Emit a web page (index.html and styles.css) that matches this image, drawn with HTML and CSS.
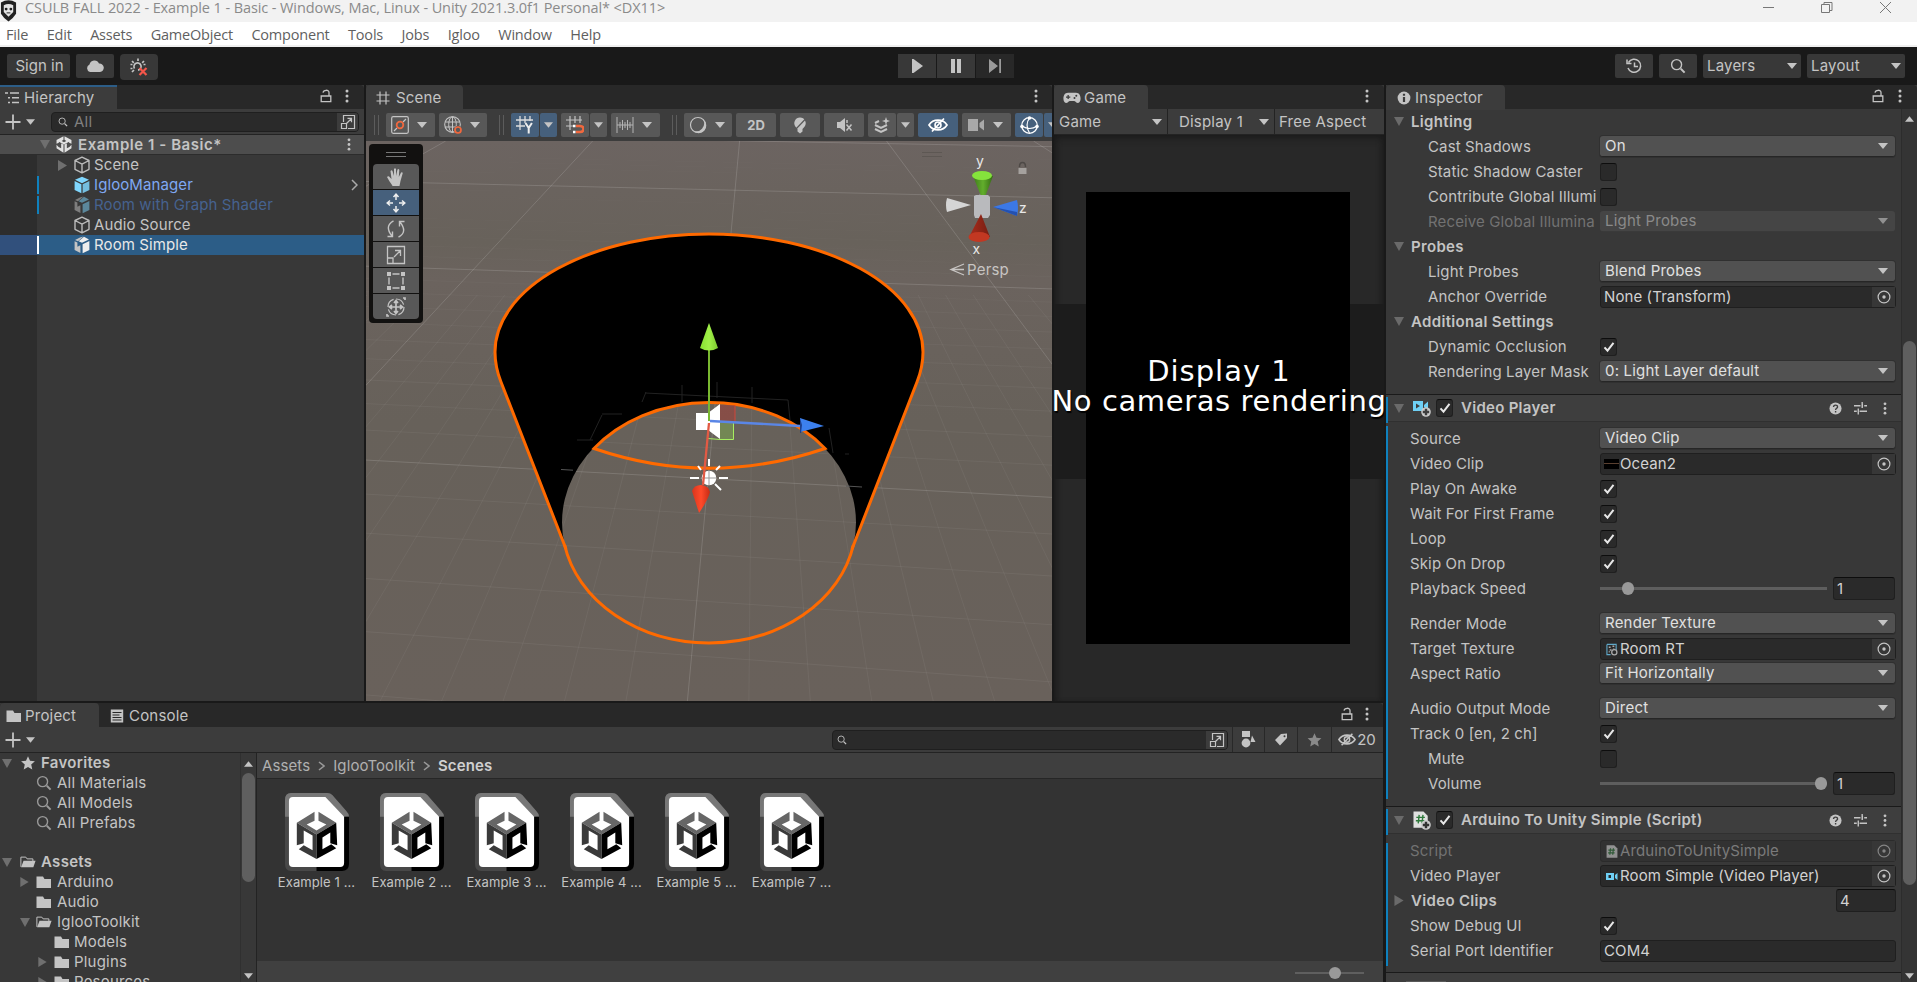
FILE: index.html
```html
<!DOCTYPE html>
<html lang="en">
<head>
<meta charset="utf-8">
<title>CSULB FALL 2022 - Example 1 - Basic</title>
<link rel="stylesheet" href="styles.css">
</head>
<body>
<svg class="defs" width="0" height="0">
  <defs>
    <symbol id="i-lock" viewBox="0 0 12 14"><path d="M1.2 7h9.6v5.6H1.2zM3 3.6C3.4 .6 9 .4 9 3.6V7" fill="none" stroke="currentColor" stroke-width="1.3"/></symbol>
    <symbol id="i-kebab" viewBox="0 0 4 14"><circle cx="2" cy="2" r="1.5"/><circle cx="2" cy="7" r="1.5"/><circle cx="2" cy="12" r="1.5"/></symbol>
    <symbol id="i-down" viewBox="0 0 10 6"><path d="M0 0h10L5 6z"/></symbol>
    <symbol id="i-up" viewBox="0 0 10 6"><path d="M0 6h10L5 0z"/></symbol>
    <symbol id="i-right" viewBox="0 0 10 12"><path d="M0 0v12l10-6z"/></symbol>
    <symbol id="i-plus" viewBox="0 0 16 16"><path d="M8 .5v15M.5 8h15" stroke="currentColor" stroke-width="1.8"/></symbol>
    <symbol id="i-search" viewBox="0 0 16 16"><circle cx="6.6" cy="6.6" r="5" fill="none" stroke="currentColor" stroke-width="1.4"/><path d="M10.8 10.8l3.8 3.8" stroke="currentColor" stroke-width="2"/></symbol>
    <symbol id="i-open" viewBox="0 0 16 16"><path d="M3.5 8V1.5h11v13H8M1.5 9.500h5v5h-5zM6 10l5.500-5.500M7.500 4.300h4v4" fill="none" stroke="currentColor" stroke-width="1.2"/></symbol>
    <symbol id="i-cube" viewBox="0 0 18 18"><path d="M9 1.200l7 3.300v8.800l-7 3.600-7-3.600V4.500zM2 4.500l7 3.700 7-3.700M9 8.200v8.600" fill="none" stroke="currentColor" stroke-width="1.400" stroke-linejoin="round"/></symbol>
    <symbol id="i-prefab" viewBox="0 0 18 18"><path d="M9 .8l7 3-7 3.400-7-3.400z"/><path d="M1.600 5l6.800 3.300v9L1.600 14z"/><path d="M16.400 5L9.600 8.300v9l6.800-3.300z" opacity=".85"/></symbol>
    <symbol id="i-model" viewBox="0 0 18 18"><path d="M7 1.500l3.500-1L5 5.200 2 4zM1.600 5.300l2.800 1.200v4.300l3-1.500V17L1.600 14z" fill="#c4c4c4"/><path d="M11 .8l5 2.600-7 3.400-3.400-1.500z"/><path d="M16.400 5L9.600 8.300v9l6.800-3.300z"/></symbol>
    <symbol id="i-unity" viewBox="0 0 60 66">
      <path d="M28 1L1 16v14l9-4V22l11 6 9 5v-9l-9-5 7-4zM32 1l27 15v14l-9-4V22l-11 6-9 5v-9l9-5-7-4zM1 34v14l27 17V33l-9-4v19L9 43zM59 34v14L32 65V33l9-4v19l10-5z" fill="#e2e2e2"/>
    </symbol>
    <symbol id="i-grid" viewBox="0 0 14 14"><path d="M4 .5v13M10 .5v13M.5 4h13M.5 10h13" stroke="currentColor" stroke-width="1.200"/></symbol>
    <symbol id="i-tree" viewBox="0 0 16 14"><path d="M0 2h3M5 2h9M3 6.700h2M7 6.700h7M3 11.500h2M7 11.500h7" stroke="currentColor" stroke-width="1.500"/></symbol>
    <symbol id="i-pad" viewBox="0 0 18 12"><path fill-rule="evenodd" d="M5 .8h8c6 0 5.500 10.200 2 10.200-2 0-2.500-2-4-2H7c-1.500 0-2 2-4 2C-.5 11-1 .8 5 .8zM4.500 3v1.400H3v1.300h1.500V7h1.300V5.700h1.500V4.400H5.800V3zM13.300 2.800a1 1 0 100 2 1 1 0 000-2zM11.500 5a1 1 0 100 2 1 1 0 000-2z"/></symbol>
    <symbol id="i-info" viewBox="0 0 14 14"><circle cx="7" cy="7" r="6.400"/><path d="M7 6v5M7 2.700v2" stroke="#3c3c3c" stroke-width="2.200"/></symbol>
    <symbol id="i-folder" viewBox="0 0 16 14"><path d="M.5 1.500h6.500L8.500 4h6.500v9H.5z"/></symbol>
    <symbol id="i-folder-open" viewBox="0 0 18 14"><path d="M1 12.500v-11h5.500L8 3.500h6.500v2.500" fill="none" stroke="currentColor" stroke-width="1.100"/><path d="M4 5.500h13.500L15 13H1.200z"/></symbol>
    <symbol id="i-console" viewBox="0 0 14 14"><path d="M.8.5h12.400v13H.8z"/><path d="M2.500 3.500h9M2.500 6h7M2.500 8.500h9M2.500 11h9" stroke="#282828" stroke-width="1.200"/></symbol>
    <symbol id="i-star" viewBox="0 0 14 14"><path d="M7 .3l2 4.500 4.900.5-3.700 3.200 1.100 4.900L7 10.900l-4.300 2.500 1.100-4.900L.1 5.300 5 4.800z"/></symbol>
    <symbol id="i-eye" viewBox="0 0 20 16"><path d="M1 8c4-6.500 14-6.500 18 0-4 6.500-14 6.500-18 0zM4 14.500L16 1.500" fill="none" stroke="currentColor" stroke-width="1.700"/><circle cx="10" cy="8" r="3" fill="none" stroke="currentColor" stroke-width="1.600"/></symbol>
    <symbol id="i-help" viewBox="0 0 14 14"><circle cx="7" cy="7" r="6.500"/><path d="M4.900 5.500C4.900 2.600 9.200 2.700 9.200 5.300 9.200 6.800 7.100 6.700 7.100 8.600M7.100 9.600v1.600" fill="none" stroke="#3e3e3e" stroke-width="1.500"/></symbol>
    <symbol id="i-preset" viewBox="0 0 14 14"><path d="M0 4h7M11 4h3M0 10h3M6 10h8M8.800 0v6.500M4.600 7v6.500M9 2v4" fill="none" stroke="currentColor" stroke-width="1.500"/></symbol>
    <symbol id="i-pick" viewBox="0 0 14 14"><circle cx="7" cy="7" r="5.900" fill="none" stroke="currentColor" stroke-width="1.200"/><circle cx="7" cy="7" r="1.700"/></symbol>
    <symbol id="i-check" viewBox="0 0 12 12"><path d="M1.500 6.300l3 3.300 6-7.800" fill="none" stroke="#e8e8e8" stroke-width="2"/></symbol>
    <symbol id="i-cs" viewBox="0 0 16 18"><path d="M.5.500h10.500l4.500 4.500v12.500H.5z" fill="#e0e0e0"/><path d="M6 4.500l-1 9M10 4.500l-1 9M3 7.200h9M2.600 10.800h9" stroke="#2f7a3c" stroke-width="1.700"/></symbol>
    <symbol id="i-sceneasset" viewBox="0 0 66 80">
      <path d="M6 0h37q3 0 5 2l14 16q3 3 3 6v48q0 7-7 7H6q-6 0-6-7V7q0-7 6-7z" fill="#484848"/>
      <path d="M6 0h37q3 0 5 2l14 16q3 3 3 6H0V7q0-7 6-7z" fill="#777"/>
      <path d="M32 24h33v48q0 7-7 7H32z" fill="#000"/>
      <path d="M8 4h33L60 24v47q0 4-4 4H8q-4 0-4-4V8q0-4 4-4z" fill="#fff"/>
      <path d="M30 19L12 30l20 12 20-12L34 19v9l8 4-10 6-10-6 8-4z" fill="#666"/>
      <path d="M12 30l20 12v25L14 57l5-4 9 5V43l-9-5v13l-7 2z" fill="#3a3a3a"/>
      <path d="M52 30L32 42v25l20-11-5-4-9 5V45l8-5v11l7 2z" fill="#000"/>
    </symbol>
    <linearGradient id="gGreen"><stop offset="0" stop-color="#3f7a1c"/><stop offset=".5" stop-color="#62ae2c"/><stop offset="1" stop-color="#346914"/></linearGradient>
    <linearGradient id="gRed"><stop offset="0" stop-color="#a92c1b"/><stop offset="1" stop-color="#761e12"/></linearGradient>
    <linearGradient id="gArrow"><stop offset="0" stop-color="#86e030"/><stop offset=".5" stop-color="#a0f048"/><stop offset="1" stop-color="#7cc92e"/></linearGradient>
    <linearGradient id="gTip"><stop offset="0" stop-color="#d8351c"/><stop offset=".5" stop-color="#ff4a2a"/><stop offset="1" stop-color="#c62c15"/></linearGradient>
  </defs>
</svg>

<header class="titlebar">
  <svg class="app-icon" viewBox="0 0 18 22"><path d="M1 2q8-5 16 0v12q-3 5-8 8-5-3-8-8z" fill="#222"/><path d="M4 5q5-3 10 0v7l-5 5-5-5z" fill="#e5e5e5"/><circle cx="6.500" cy="9" r="1.500" fill="#222"/><circle cx="11.500" cy="9" r="1.500" fill="#222"/><path d="M7 13h4" stroke="#222"/></svg>
  <span class="title">CSULB FALL 2022 - Example 1 - Basic - Windows, Mac, Linux - Unity 2021.3.0f1 Personal* &lt;DX11&gt;</span>
  <svg class="win-buttons" viewBox="0 0 140 22"><path d="M1 7.500h11M59.500 4.500h8v8h-8zM62 4.500v-2h8v8h-2.500M118 2l11 11M129 2l-11 11" fill="none" stroke="#777" stroke-width="1"/></svg>
</header>
<nav class="menubar"><span>File</span><span>Edit</span><span>Assets</span><span>GameObject</span><span>Component</span><span>Tools</span><span>Jobs</span><span>Igloo</span><span>Window</span><span>Help</span></nav>

<div class="toolbar">
  <div class="tb-group left">
    <div class="tb-btn signin">Sign in</div>
    <div class="tb-btn cloud"><svg width="18" height="12" viewBox="0 0 18 12"><path d="M4 12a4 4 0 01-.5-7.500A5 5 0 0113 3.500 4.200 4.200 0 0114 12z"/></svg></div>
    <div class="tb-btn bug"><svg width="18" height="18" viewBox="0 0 18 18"><path d="M4.500 10.500A3.600 3.600 0 118 12.100" fill="none" stroke="#c4c4c4" stroke-width="1.600"/><path d="M8 .5v2.500M2 3l1.800 1.800M14 3l-1.800 1.800M.5 6.500h2M.5 10.500h2M13.500 6.500h2M2 14l2-2" stroke="#c4c4c4" stroke-width="1.700"/><path d="M9.500 10l7 7M16.500 10l-7 7" stroke="#f4564a" stroke-width="2.200"/></svg></div>
  </div>
  <div class="tb-group play">
    <div class="tb-btn"><svg width="11" height="14" viewBox="0 0 11 14"><path d="M0 0h1.500L11 7 1.500 14H0z"/></svg></div>
    <div class="tb-btn"><svg width="10" height="14" viewBox="0 0 10 14"><path d="M0 0h4v14H0zM6 0h4v14H6z"/></svg></div>
    <div class="tb-btn step"><svg width="12" height="14" viewBox="0 0 12 14"><path d="M0 0l9 7-9 7zM10.200 0h1.800v14h-1.800z"/></svg></div>
  </div>
  <div class="tb-group right">
    <div class="tb-btn sq"><svg width="16" height="16" viewBox="0 0 16 16"><path d="M2.500 4.500A6.500 6.500 0 112 10M1 1.500v4h4.500M8.500 4.500v4h3.500" fill="none" stroke="#c4c4c4" stroke-width="1.500"/></svg></div>
    <div class="tb-btn sq"><svg width="16" height="16"><use href="#i-search"/></svg></div>
    <div class="tb-btn drop">Layers<svg width="10" height="6"><use href="#i-down"/></svg></div>
    <div class="tb-btn drop">Layout<svg width="10" height="6"><use href="#i-down"/></svg></div>
  </div>
</div>

<div class="workspace">
  <div class="main">
    <div class="upper">
      <section class="panel hierarchy">
        <div class="tabs">
          <div class="tab focus t-hier"><svg width="16" height="14"><use href="#i-tree"/></svg>Hierarchy</div>
          <div class="tab-tools"><svg width="12" height="14"><use href="#i-lock"/></svg><svg width="4" height="14"><use href="#i-kebab"/></svg></div>
        </div>
        <div class="subbar">
          <svg class="plus" width="16" height="16"><use href="#i-plus"/></svg><svg class="pd" width="9" height="6"><use href="#i-down"/></svg>
          <div class="search"><svg width="10" height="10"><use href="#i-search"/></svg><span>All</span><i><svg width="16" height="16"><use href="#i-open"/></svg></i></div>
        </div>
        <div class="hlist">
          <div class="hrow root"><svg class="arr dn" width="10" height="9" viewBox="0 0 10 6" preserveAspectRatio="none"><path d="M0 0h10L5 6z"/></svg><svg class="uicon" width="16" height="17"><use href="#i-unity"/></svg><b>Example 1 - Basic*</b><svg class="rk" width="4" height="13"><use href="#i-kebab"/></svg></div>
          <div class="hrow"><svg class="arr rt" width="9" height="11"><use href="#i-right"/></svg><svg class="ic" width="18" height="18"><use href="#i-cube"/></svg>Scene</div>
          <div class="hrow mod blue"><svg class="ic sky" width="18" height="18"><use href="#i-prefab"/></svg>IglooManager<svg class="rk" width="7" height="12" viewBox="0 0 7 12"><path d="M1 1l5 5-5 5" fill="none" stroke="#aaa" stroke-width="1.500"/></svg></div>
          <div class="hrow mod dim"><svg class="ic sky" width="18" height="18"><use href="#i-model"/></svg>Room with Graph Shader</div>
          <div class="hrow"><svg class="ic" width="18" height="18"><use href="#i-cube"/></svg>Audio Source</div>
          <div class="hrow sel"><svg class="ic" width="18" height="18"><use href="#i-model"/></svg>Room Simple</div>
        </div>
      </section>

      <section class="panel scene">
        <div class="tabs">
          <div class="tab t-scene"><svg width="14" height="14"><use href="#i-grid"/></svg>Scene</div>
          <div class="tab-tools"><svg width="4" height="14"><use href="#i-kebab"/></svg></div>
        </div>
        <div class="scenebar">
          <i class="grip"></i>
          <div class="sb w49"><svg width="18" height="18" viewBox="0 0 18 18"><rect x=".7" y=".7" width="16.600" height="16.600" rx="1.500" fill="none" stroke="#c4c4c4" stroke-width="1.200"/><path d="M3 15l3-3M12 6l3-3" stroke="#c4c4c4" stroke-width="1.200"/><circle cx="9" cy="9" r="3.300" fill="none" stroke="#f0683e" stroke-width="1.800"/></svg><svg width="10" height="6"><use href="#i-down"/></svg></div>
          <div class="sb w48"><svg width="18" height="18" viewBox="0 0 18 18"><circle cx="8.500" cy="8.500" r="7.800" fill="none" stroke="#c4c4c4" stroke-width="1.100"/><ellipse cx="8.500" cy="8.500" rx="3.800" ry="7.800" fill="none" stroke="#c4c4c4"/><path d="M1 6h15M1 11h15M8.500 1v15" stroke="#c4c4c4"/><circle cx="14" cy="14" r="4.200" fill="#585858"/><circle cx="14" cy="14" r="3" fill="none" stroke="#f0683e" stroke-width="1.700"/></svg><svg width="10" height="6"><use href="#i-down"/></svg></div>
          <i class="grip g2"></i>
          <div class="sb on w28"><svg width="18" height="18" viewBox="0 0 18 18"><path d="M4 0v14M9 0v7M14 0v5M0 4h17M0 10h9" stroke="#ddd" stroke-width="1.300"/><path d="M9.500 7l3.200 5 3.200-5M12.700 12v5.500" fill="none" stroke="#eee" stroke-width="2"/></svg></div><div class="sb on w17"><svg width="9" height="6"><use href="#i-down"/></svg></div>
          <div class="sb w28 m4"><svg width="18" height="18" viewBox="0 0 18 18"><path d="M4 0v14M9 0v7M14 0v7M0 4h16M0 10h7" stroke="#c4c4c4" stroke-width="1.200"/><path d="M10 10h4q3.500 0 3.500 3t-3.500 3h-4" fill="none" stroke="#f0683e" stroke-width="2.500"/><path d="M7 8.700h2.500v2.500H7zM7 14.800h2.500v2.500H7z" fill="#fff"/></svg></div><div class="sb w17"><svg width="9" height="6"><use href="#i-down"/></svg></div>
          <div class="sb w49 m4"><svg width="18" height="16" viewBox="0 0 18 16"><path d="M1 0v16M17 0v16M4 5v6M6.500 3v10M9 5v6M11.500 3v10M14 5v6M1 8h16" stroke="#b4b4b4" stroke-width="1"/></svg><svg width="10" height="6"><use href="#i-down"/></svg></div>
          <i class="grip g3"></i>
          <div class="sb w48"><svg width="18" height="18" viewBox="0 0 18 18"><circle cx="9" cy="9" r="7.500" fill="none" stroke="#c4c4c4" stroke-width="1.200"/><path d="M14 3.500A7.500 7.500 0 114 14.500 7.800 7.800 0 0014 3.500z"/><circle cx="8.300" cy="8" r="5.600" fill="#585858"/></svg><svg width="10" height="6"><use href="#i-down"/></svg></div>
          <div class="sb w40 m4 twod">2D</div>
          <div class="sb w40 m4"><svg width="14" height="17" viewBox="0 0 14 17"><path d="M7 .5a5.800 5.800 0 014.500 9.300L9.500 12v2.500L7 16.500l-2.500-2V12L2.500 9.800A5.800 5.800 0 017 .5z"/><path d="M2 13L13 1.500" stroke="#585858" stroke-width="1.200"/></svg></div>
          <div class="sb w40 m4"><svg width="17" height="16" viewBox="0 0 17 16"><path d="M1 5h3l5-4v14l-5-4H1z"/><path d="M10.500 7.500l5 6M15.500 7.500l-5 6M11 3v3" stroke="#c4c4c4" stroke-width="1.500"/></svg></div>
          <div class="sb w28 m4"><svg width="17" height="17" viewBox="0 0 17 17"><path d="M1 8l6 3 6-3M1 12l6 3 6-3M1 6l4-2" fill="none" stroke="#c4c4c4" stroke-width="2"/><path d="M12 0l1 3 3 1-3 1-1 3-1-3-3-1 3-1z"/></svg></div><div class="sb w17"><svg width="9" height="6"><use href="#i-down"/></svg></div>
          <div class="sb on w40 m4"><svg class="lit" width="20" height="16"><use href="#i-eye"/></svg></div>
          <div class="sb w49 m4"><svg width="17" height="12" viewBox="0 0 17 12"><path d="M0 0h10v12H0zM11.500 4L16 .5v11L11.500 8z" opacity=".75"/></svg><svg width="10" height="6"><use href="#i-down"/></svg></div>
          <div class="sb on w28 m4"><svg width="19" height="19" viewBox="0 0 19 19"><circle cx="9.500" cy="9.500" r="7.800" fill="none" stroke="#fff" stroke-width="1.200"/><path d="M9.500 2q-5 7 0 15M2 10q8 5 15 0" fill="none" stroke="#fff" stroke-width="1.200"/><circle cx="9.500" cy="2" r="1.800" fill="#fff"/><circle cx="2" cy="10.500" r="1.800" fill="#fff"/><circle cx="17" cy="10.500" r="1.800" fill="#fff"/></svg></div><div class="sb on w9"><svg width="9" height="6"><use href="#i-down"/></svg></div>
        </div>
        <div class="viewport">
          <svg class="world" viewBox="366 141 686 560" width="686" height="560">
            <g id="grid" fill="none" stroke="#fff" stroke-width="1"></g>
            <path fill-rule="evenodd" fill="#000" d="M495 352A214 118 0 01923 352C923 364 921 372 917 382L853.400 545A147 120.500 0 01564.600 545L501 382C497 372 495 364 495 352zM709 402A147 120.500 0 00562 522.500A147 120.500 0 00709 643A147 120.500 0 00856 522.500A147 120.500 0 00709 402z"/>
            <path d="M577 440h16M590 440l12-25M602 414h20M642 402l4-10M645 393l143 7 2 20M682 385v17M717 382v16M752 387v16M829 428l4 25M845 454h4" fill="none" stroke="#222"/>
            <path d="M561 469.500l12 .7M846 486l16 1" stroke="#555"/>
            <g fill="none" stroke="#ff6a00" stroke-width="3">
              <path d="M566 549L501 382C497 372 495 364 495 352A214 118 0 01923 352C923 364 921 372 917 382L852 549"/>
              <path d="M564.600 545A147 120.500 0 00853.400 545"/>
              <path d="M594 448.500A147 120.500 0 01825 448.500Q709 488 594 448.500z" stroke-linejoin="miter"/>
            </g>
            <path d="M696 413h12l12-9v35l-12-9h-12z" fill="#fff"/>
            <path d="M720 405h15v17h-15z" fill="#a04038" fill-opacity=".55"/><path d="M735 405v17" stroke="#d0473a"/>
            <path d="M720 422h13v17.500h-13z" fill="#7ba050" fill-opacity=".6"/><path d="M708 438.500l12 1h13.500v-17" fill="none" stroke="#a6ee60"/>
            <path d="M709 349v72" stroke="#79b830" stroke-width="2"/>
            <path d="M709 323l9 25q-9 5-18 0z" fill="url(#gArrow)"/>
            <path d="M710 421l90 5" stroke="#5a86e6" stroke-width="2.300"/>
            <path d="M800 418l24 8-24 6z" fill="#3c80ee"/><path d="M800 418l2 7-1 8-1 0z" fill="#1d3f8c"/>
            <path d="M709 459v7M690 478h9M719 478h9M715 484l6 6M716 470l4-4M698 466l3 4" stroke="#fff" stroke-width="2"/>
            <circle cx="709" cy="478" r="7.300" fill="#fff"/><path d="M709 471v14M702 478h14" stroke="#999"/>
            <path d="M709 423l-6 62" stroke="#e25a44" stroke-width="2.300"/>
            <path d="M692 491q2-6 9-6 8 1 9 7-2 8-11 21z" fill="url(#gTip)"/>
            <g class="gizmo">
              <path d="M922 152.500h20M922 156.500h20" stroke="#5d5753"/>
              <path d="M978 196l6-8 1 8-4 6zM978 217l6 9-1 3z" fill="#8a8a8a"/>
              <path d="M973 176h20l-8 21-2 4z" fill="url(#gGreen)"/><ellipse cx="982" cy="175.500" rx="10" ry="4.500" fill="#85e33c"/>
              <path d="M974 196l2-1h12l2 2v18l-2 3h-13l-1-3z" fill="#b9babd"/>
              <path d="M947 198q-2 7 0 14l24-7z" fill="#d5d5d5"/>
              <path d="M993 207l24-7q2 8 0 16z" fill="#3b78e6"/><path d="M993 207l24 5v4z" fill="#2451b0"/>
              <path d="M981 214l9 23h-21z" fill="url(#gRed)"/><ellipse cx="979" cy="237" rx="10.500" ry="5" fill="#c23822"/>
              <path d="M1018.500 168h8v6h-8z" fill="#a5a19e"/><path d="M1019.500 167c0-6 6-6 6 0" fill="none" stroke="#4e4946" stroke-width="1.500"/>
              <path d="M964 264l-13 5.500 13 5.500M951 269.500h13" fill="none" stroke="#c8c5c3" stroke-width="1.300"/>
              <text x="976" y="166">y</text><text x="1019" y="213">z</text><text x="972.500" y="254">x</text>
              <text x="967" y="275" class="persp">Persp</text>
            </g>
          </svg>
          <div class="tools">
            <i class="h"></i>
            <div><svg width="20" height="20" viewBox="0 0 20 20"><path d="M6 18q-3-4-5-8 1.500-1.500 3 .5l1.500 1.500L4.500 4q1.200-1.500 2 0L8 9V2q1-1.500 2 0v7l1.500-6.500q1.200-1 1.800.5L12.800 10l2.300-4.500q1.500-.8 1.600.8L14.500 14l-1 5H6.500z"/></svg></div>
            <div class="on"><svg width="20" height="20" viewBox="0 0 20 20"><path d="M10 7V1.500M10 13v5.500M7 10H1.500M13 10h5.500M7.500 4L10 1.200 12.500 4M7.500 16l2.500 2.800 2.500-2.800M4 7.500L1.200 10 4 12.500M16 7.500l2.800 2.500-2.800 2.500" fill="none" stroke="#eee" stroke-width="1.500"/></svg></div>
            <div><svg width="20" height="20" viewBox="0 0 20 20"><path d="M7.500 1.800Q-2 7 6 17M1.500 17.500h5v-5M12.500 18.200Q22 13 14 3M18.500 2.500h-5v5" fill="none" stroke="#c4c4c4" stroke-width="1.400"/></svg></div>
            <div><svg width="20" height="20" viewBox="0 0 20 20"><path d="M1.500 1.500h17v17h-17zM1.500 13h5.500v5.500M8 12l6-6M9 5.500h5.500V11" fill="none" stroke="#c4c4c4" stroke-width="1.300"/></svg></div>
            <div><svg width="20" height="20" viewBox="0 0 20 20"><path d="M1 1h4v4H1zM15 1h4v4h-4zM1 15h4v4H1zM15 15h4v4h-4z"/><path d="M6.500 3h7M6.500 17h7M3 6.500v7M17 6.500v7" stroke="#c4c4c4" stroke-width="1.400"/></svg></div>
            <div><svg width="20" height="20" viewBox="0 0 20 20"><circle cx="10" cy="10" r="8" fill="none" stroke="#c4c4c4" stroke-width="1.200" stroke-dasharray="10 2.500"/><path d="M10 4v12M4 10h12M8 6l2-2.500L12 6M8 14l2 2.500 2-2.500M6 8l-2.500 2L6 12M14 8l2.500 2-2.500 2M17 1h2v2M1 17v2h2" fill="none" stroke="#c4c4c4" stroke-width="1.700"/></svg></div>
          </div>
        </div>
      </section>

      <section class="panel game">
        <div class="tabs">
          <div class="tab t-game"><svg width="18" height="12"><use href="#i-pad"/></svg>Game</div>
          <div class="tab-tools"><svg width="4" height="14"><use href="#i-kebab"/></svg></div>
        </div>
        <div class="gamebar">
          <div class="gd a">Game<svg width="10" height="6"><use href="#i-down"/></svg></div>
          <div class="gd b">Display 1<svg width="10" height="6"><use href="#i-down"/></svg></div>
          <div class="gd c">Free Aspect</div>
        </div>
        <div class="gameview">
          <div class="band"></div>
          <div class="screen"></div>
          <div class="msg"><span class="m1">Display 1</span><span class="m2">No cameras rendering</span></div>
        </div>
      </section>
    </div>

    <section class="panel project">
      <div class="tabs">
        <div class="tab t-proj"><svg width="16" height="14"><use href="#i-folder"/></svg>Project</div>
        <div class="tab plain"><svg width="14" height="14"><use href="#i-console"/></svg>Console</div>
        <div class="tab-tools"><svg width="12" height="14"><use href="#i-lock"/></svg><svg width="4" height="14"><use href="#i-kebab"/></svg></div>
      </div>
      <div class="subbar pbar">
        <svg class="plus" width="16" height="16"><use href="#i-plus"/></svg><svg class="pd" width="9" height="6"><use href="#i-down"/></svg>
        <div class="search ps"><svg width="10" height="10"><use href="#i-search"/></svg><i><svg width="16" height="16"><use href="#i-open"/></svg></i></div>
        <div class="pf f1"><svg width="15" height="17" viewBox="0 0 15 17"><path d="M1 0h8v6H1zM11 4.500l3.500 6.500H9.500z"/><circle cx="5" cy="12" r="4.400"/></svg></div>
        <div class="pf f2"><svg width="14" height="13" viewBox="0 0 14 13"><path fill-rule="evenodd" d="M7 1l6-.5V5L6 12.500 1 7zM10.500 2.200a1 1 0 100 2 1 1 0 000-2z"/></svg></div>
        <div class="pf f3"><svg width="15" height="14"><use href="#i-star"/></svg></div>
        <div class="pf f4"><svg width="18" height="15"><use href="#i-eye"/></svg>20</div>
      </div>
      <div class="pbody">
        <div class="tree">
          <div class="trow l0"><svg class="arr" width="10" height="9" viewBox="0 0 10 9"><path d="M0 0h10L5 9z"/></svg><svg class="ti" width="14" height="14"><use href="#i-star"/></svg><b>Favorites</b></div>
          <div class="trow l1"><svg class="ti s" width="16" height="16"><use href="#i-search"/></svg>All Materials</div>
          <div class="trow l1"><svg class="ti s" width="16" height="16"><use href="#i-search"/></svg>All Models</div>
          <div class="trow l1"><svg class="ti s" width="16" height="16"><use href="#i-search"/></svg>All Prefabs</div>
          <div class="trow gap"></div>
          <div class="trow l0"><svg class="arr" width="10" height="9" viewBox="0 0 10 9"><path d="M0 0h10L5 9z"/></svg><svg class="ti" width="17" height="14"><use href="#i-folder-open"/></svg><b>Assets</b></div>
          <div class="trow l1"><svg class="arr" width="9" height="10" viewBox="0 0 10 12"><path d="M0 0v12l10-6z"/></svg><svg class="ti" width="16" height="14"><use href="#i-folder"/></svg>Arduino</div>
          <div class="trow l1"><svg class="ti" width="16" height="14"><use href="#i-folder"/></svg>Audio</div>
          <div class="trow l1"><svg class="arr" width="10" height="9" viewBox="0 0 10 9"><path d="M0 0h10L5 9z"/></svg><svg class="ti" width="16" height="14"><use href="#i-folder-open"/></svg>IglooToolkit</div>
          <div class="trow l2"><svg class="ti" width="16" height="14"><use href="#i-folder"/></svg>Models</div>
          <div class="trow l2"><svg class="arr" width="9" height="10" viewBox="0 0 10 12"><path d="M0 0v12l10-6z"/></svg><svg class="ti" width="16" height="14"><use href="#i-folder"/></svg>Plugins</div>
          <div class="trow l2"><svg class="arr" width="9" height="10" viewBox="0 0 10 12"><path d="M0 0v12l10-6z"/></svg><svg class="ti" width="16" height="14"><use href="#i-folder"/></svg>Resources</div>
        </div>
        <div class="tscroll"><svg width="9" height="6"><use href="#i-up"/></svg><i></i><svg width="9" height="6"><use href="#i-down"/></svg></div>
        <div class="assets">
          <div class="crumbs"><span>Assets</span><svg width="7" height="10" viewBox="0 0 7 10"><path d="M1 1l5 4-5 4" fill="none" stroke="#999" stroke-width="1.600"/></svg><span>IglooToolkit</span><svg width="7" height="10" viewBox="0 0 7 10"><path d="M1 1l5 4-5 4" fill="none" stroke="#999" stroke-width="1.600"/></svg><b>Scenes</b></div>
          <div class="agrid">
            <div class="asset"><svg width="65" height="79"><use href="#i-sceneasset"/></svg><span>Example 1 ...</span></div>
            <div class="asset"><svg width="65" height="79"><use href="#i-sceneasset"/></svg><span>Example 2 ...</span></div>
            <div class="asset"><svg width="65" height="79"><use href="#i-sceneasset"/></svg><span>Example 3 ...</span></div>
            <div class="asset"><svg width="65" height="79"><use href="#i-sceneasset"/></svg><span>Example 4 ...</span></div>
            <div class="asset"><svg width="65" height="79"><use href="#i-sceneasset"/></svg><span>Example 5 ...</span></div>
            <div class="asset"><svg width="65" height="79"><use href="#i-sceneasset"/></svg><span>Example 7 ...</span></div>
          </div>
          <div class="afoot"><div class="zoom"><i></i></div></div>
        </div>
      </div>
    </section>
  </div>

  <section class="panel inspector">
    <div class="tabs">
      <div class="tab t-insp"><svg width="14" height="14"><use href="#i-info"/></svg>Inspector</div>
      <div class="tab-tools"><svg width="12" height="14"><use href="#i-lock"/></svg><svg width="4" height="14"><use href="#i-kebab"/></svg></div>
    </div>
    <div class="ibody">
      <div class="fields">
        <div class="group">
          <div class="row fold"><svg class="fa" width="10" height="9" viewBox="0 0 10 9"><path d="M0 0h10L5 9z"/></svg><b>Lighting</b></div>
          <div class="row in"><label>Cast Shadows</label><div class="dd">On<svg width="10" height="6"><use href="#i-down"/></svg></div></div>
          <div class="row in"><label>Static Shadow Caster</label><div class="cb"></div></div>
          <div class="row in"><label>Contribute Global Illumi</label><div class="cb"></div></div>
          <div class="row in off"><label>Receive Global Illumina</label><div class="dd">Light Probes<svg width="10" height="6"><use href="#i-down"/></svg></div></div>
          <div class="row fold"><svg class="fa" width="10" height="9" viewBox="0 0 10 9"><path d="M0 0h10L5 9z"/></svg><b>Probes</b></div>
          <div class="row in"><label>Light Probes</label><div class="dd">Blend Probes<svg width="10" height="6"><use href="#i-down"/></svg></div></div>
          <div class="row in"><label>Anchor Override</label><div class="of">None (Transform)<i><svg width="14" height="14"><use href="#i-pick"/></svg></i></div></div>
          <div class="row fold"><svg class="fa" width="10" height="9" viewBox="0 0 10 9"><path d="M0 0h10L5 9z"/></svg><b>Additional Settings</b></div>
          <div class="row in"><label>Dynamic Occlusion</label><div class="cb"><svg width="12" height="12"><use href="#i-check"/></svg></div></div>
          <div class="row in"><label>Rendering Layer Mask</label><div class="dd">0: Light Layer default<svg width="10" height="6"><use href="#i-down"/></svg></div></div>
        </div>

        <div class="chead">
          <svg class="fa" width="10" height="9" viewBox="0 0 10 9"><path d="M0 0h10L5 9z"/></svg>
          <svg class="cicon" width="18" height="18" viewBox="0 0 18 18"><path fill-rule="evenodd" d="M0 2h10v10H0zM3 4.500v5l4-2.500z" fill="#6fd0f5"/><path d="M11 6l4-3.500v8L11 8z" fill="#6fd0f5"/><circle cx="13" cy="13" r="4.800" fill="#ccc"/><path d="M13 9.800v6.400M9.800 13h6.400" stroke="#3e3e3e" stroke-width="2.400"/></svg>
          <div class="cb"><svg width="12" height="12"><use href="#i-check"/></svg></div><b>Video Player</b>
          <span class="hi"><svg width="13" height="13"><use href="#i-help"/></svg><svg width="13" height="13"><use href="#i-preset"/></svg><svg width="4" height="13"><use href="#i-kebab"/></svg></span>
        </div>
        <div class="group bar vp">
          <div class="row"><label>Source</label><div class="dd">Video Clip<svg width="10" height="6"><use href="#i-down"/></svg></div></div>
          <div class="row"><label>Video Clip</label><div class="of"><em class="thumb"></em>Ocean2<i><svg width="14" height="14"><use href="#i-pick"/></svg></i></div></div>
          <div class="row"><label>Play On Awake</label><div class="cb"><svg width="12" height="12"><use href="#i-check"/></svg></div></div>
          <div class="row"><label>Wait For First Frame</label><div class="cb"><svg width="12" height="12"><use href="#i-check"/></svg></div></div>
          <div class="row"><label>Loop</label><div class="cb"><svg width="12" height="12"><use href="#i-check"/></svg></div></div>
          <div class="row"><label>Skip On Drop</label><div class="cb"><svg width="12" height="12"><use href="#i-check"/></svg></div></div>
          <div class="row"><label>Playback Speed</label><div class="slider"><i style="margin-left:22px"></i></div><div class="num">1</div></div>
          <div class="row gap"><label>Render Mode</label><div class="dd">Render Texture<svg width="10" height="6"><use href="#i-down"/></svg></div></div>
          <div class="row"><label>Target Texture</label><div class="of"><svg class="oi" width="12" height="13" viewBox="0 0 13 13"><path d="M1 1h10v6M1 1v11h4" fill="none" stroke="#5fa8c8" stroke-width="1.200"/><path d="M3 4h2M7 3h2M4 7h2M8 6h1M3 9h1" stroke="#aaa" stroke-width="1.500"/><circle cx="9" cy="9.500" r="2.800" fill="none" stroke="#aaa" stroke-width="1.400"/></svg>Room RT<i><svg width="14" height="14"><use href="#i-pick"/></svg></i></div></div>
          <div class="row"><label>Aspect Ratio</label><div class="dd">Fit Horizontally<svg width="10" height="6"><use href="#i-down"/></svg></div></div>
          <div class="row gap"><label>Audio Output Mode</label><div class="dd">Direct<svg width="10" height="6"><use href="#i-down"/></svg></div></div>
          <div class="row"><label>Track 0 [en, 2 ch]</label><div class="cb"><svg width="12" height="12"><use href="#i-check"/></svg></div></div>
          <div class="row in"><label>Mute</label><div class="cb"></div></div>
          <div class="row in"><label>Volume</label><div class="slider"><i style="margin-left:215px"></i></div><div class="num">1</div></div>
        </div>

        <div class="chead">
          <svg class="fa" width="10" height="9" viewBox="0 0 10 9"><path d="M0 0h10L5 9z"/></svg>
          <svg class="cicon" width="18" height="19" viewBox="0 0 18 19"><g transform="scale(.95)"><path d="M.5.500h10.500l4.500 4.500v12.500H.5z" fill="#e0e0e0"/><path d="M6.500 4l-1 9M10.500 4l-1 9M3.500 6.700h9M3 10.300h9" stroke="#2f7a3c" stroke-width="1.500"/></g><circle cx="13" cy="14" r="4.800" fill="#ccc"/><path d="M13 10.800v6.400M9.800 14h6.400" stroke="#333" stroke-width="2.400"/></svg>
          <div class="cb"><svg width="12" height="12"><use href="#i-check"/></svg></div><b>Arduino To Unity Simple (Script)</b>
          <span class="hi"><svg width="13" height="13"><use href="#i-help"/></svg><svg width="13" height="13"><use href="#i-preset"/></svg><svg width="4" height="13"><use href="#i-kebab"/></svg></span>
        </div>
        <div class="group bar ar">
          <div class="row off"><label>Script</label><div class="of"><svg class="oi" width="12" height="13"><use href="#i-cs"/></svg>ArduinoToUnitySimple<i><svg width="14" height="14"><use href="#i-pick"/></svg></i></div></div>
          <div class="row"><label>Video Player</label><div class="of"><svg class="oi" width="12" height="9" viewBox="0 0 12 9"><path fill-rule="evenodd" d="M0 1h8v7H0zM2.500 3v3h2.500V3zM9 3l2.500-2v7L9 6z" fill="#6fd0f5"/></svg>Room Simple (Video Player)<i><svg width="14" height="14"><use href="#i-pick"/></svg></i></div></div>
          <div class="row fold"><svg class="fa" width="10" height="11" viewBox="0 0 10 12"><path d="M0 0v12l10-6z"/></svg><b>Video Clips</b><div class="num four">4</div></div>
          <div class="row"><label>Show Debug UI</label><div class="cb"><svg width="12" height="12"><use href="#i-check"/></svg></div></div>
          <div class="row"><label>Serial Port Identifier</label><div class="of tf">COM4</div></div>
        </div>
        <div class="next"><i></i></div>
      </div>
      <div class="iscroll"><svg width="9" height="6"><use href="#i-up"/></svg><i></i><svg width="9" height="6"><use href="#i-down"/></svg></div>
    </div>
  </section>
</div>
<script src="grid.js"></script>
</body>
</html>
```
FILE: grid.js
```js
// Perspective floor grid: lines converge on a shared horizon above the view.
(function () {
  var g = document.getElementById('grid');
  var horizon = -35, vx = 756, left = 366, right = 1053, tilt = 1.0755;
  function line(x1, y1, x2, y2, alpha) {
    var p = document.createElementNS('http://www.w3.org/2000/svg', 'path');
    p.setAttribute('d', 'M' + x1 + ' ' + y1 + 'L' + x2 + ' ' + y2);
    p.setAttribute('stroke-opacity', alpha);
    g.appendChild(p);
  }
  for (var i = -60; i <= 60; i++) {
    var slope = -0.0932 + i * 0.0835;
    var major = i % 10 === 0;
    if (major) line(vx + slope * 176, 141, vx + slope * 736, 701, 0.14);
    else line(vx + slope * 330, 295, vx + slope * 736, 701, 0.05);
  }
  for (var k = -8; k <= 40; k++) {
    var d = 1 / (0.00202 + k * 0.00013);
    var big = k % 10 === 0;
    var a = big ? 0.14 : Math.max(0.008, 0.055 - Math.max(k, 0) * 0.003);
    if (k > -6) line(left, horizon + d, right, horizon + d * tilt, a);
  }
})();
```
FILE: styles.css
```css
* { box-sizing: border-box; }
body { margin: 0; width: 1917px; height: 982px; overflow: hidden; background: #191919; color: #c4c4c4; font: 15px/20px Inter, "Liberation Sans", sans-serif; letter-spacing: .2px; white-space: nowrap; }
svg { display: block; fill: #c4c4c4; color: #c4c4c4; flex: none; }
use { fill: inherit; }
.defs { position: absolute; }
b { font-weight: 600; }
i, em { font-style: normal; }

.titlebar { height: 22px; background: #f2f2f2; display: flex; color: #8a8a8a; font: 14.5px/15px "Open Sans", "Noto Sans", sans-serif; letter-spacing: -.09px; }
.app-icon { width: 17px; height: 22px; }
.title { margin-left: 8px; flex: 1; }
.win-buttons { width: 140px; height: 22px; margin-right: 15px; }
.menubar { height: 25px; background: #fff; border-bottom: 2px solid #f0f0f0; display: flex; gap: 18.5px; padding-left: 6px; color: #5f5f5f; font: 14.5px/25px "Open Sans", "Noto Sans", sans-serif; letter-spacing: -.2px; }

.toolbar { height: 38px; background: #191919; display: grid; grid-template-columns: 898px 1fr auto; padding: 7px 12px 7px 0; }
.tb-group { display: flex; height: 24px; }
.tb-btn { height: 24px; background: #383838; border-radius: 2px; display: flex; align-items: center; justify-content: center; }
.left { padding-left: 7px; gap: 6px; }
.signin { width: 63px; padding-left: 2px; letter-spacing: 0; }
.cloud { width: 38px; }
.bug { width: 38px; height: 26px; border-radius: 4px; }
.play { gap: 1px; }
.play .tb-btn { width: 38px; border-radius: 0; }
.play .step { background: #282828; }
.step svg { fill: #9a9a9a; }
.right { gap: 6px; }
.sq { width: 38px; }
.drop { width: 98px; justify-content: space-between; padding: 0 4px; }

.workspace { height: 897px; display: flex; gap: 2px; }
.main { width: 1384px; display: flex; flex-direction: column; gap: 2px; }
.upper { height: 616px; display: flex; gap: 2px; }
.panel { display: flex; flex-direction: column; background: #383838; }
.tabs { height: 24px; background: #282828; display: flex; border-radius: 4px 4px 0 0; flex: none; }
.tab { background: #3c3c3c; display: flex; align-items: center; gap: 5px; border-radius: 4px 4px 0 0; height: 25px; padding-left: 6px; }
.tab.plain { background: none; gap: 5px; padding-left: 11px; }
.tab-tools { margin-left: auto; display: flex; gap: 12px; padding: 4px 15px 0 0; }
.t-hier { width: 117px; height: 24px; border-top: 2px solid #2c5d87; border-radius: 0; padding-left: 5px; gap: 3px; padding-bottom: 1px; }
.t-scene { width: 97px; padding-left: 10px; gap: 6px; }
.t-scene + .tab-tools { padding-right: 14px; }
.t-game { width: 94px; padding-left: 9px; gap: 3px; }
.t-proj { width: 99px; gap: 3px; }
.t-insp { width: 119px; padding-left: 11px; gap: 4px; }

.subbar { height: 26px; background: #3c3c3c; border-bottom: 1px solid #232323; display: flex; align-items: center; flex: none; }
.plus { margin-left: 5px; }
.pd { margin-left: 5px; }
.search { margin-left: auto; margin-right: 5px; width: 308px; height: 20px; background: #2a2a2a; border: 1px solid #1f1f1f; border-radius: 4px; display: flex; align-items: center; padding-left: 6px; color: #808080; gap: 6px; }
.search i { margin-left: auto; width: 21px; height: 18px; background: #3c3c3c; display: flex; align-items: center; justify-content: center; border-radius: 0 3px 3px 0; }

.hierarchy { width: 364px; }
.hierarchy .tab-tools { gap: 13px; }
.hlist { flex: 1; background: linear-gradient(90deg, #2d2d2d 37px, #383838 37px); letter-spacing: .1px; }
.hrow { height: 20px; display: flex; align-items: center; position: relative; padding-left: 58px; }
.hrow .arr.dn { margin-left: -18px; margin-right: 6px; fill: #6f6f6f; }
.hrow.root { background: #4d4d4d; border-bottom: 1px solid #2c2c2c; }
.root b { letter-spacing: .55px; }
.uicon { margin-right: 6px; }
.hrow .arr.rt { margin-right: 6px; fill: #6f6f6f; }
.ic { margin-left: 15px; margin-right: 3px; color: #bbb; }
.arr.rt + .ic { margin-left: 0; }
.sky { fill: #7fd6fd; }
.blue { color: #7fa8f2; }
.dim { color: #46628f; }
.dim .sky { opacity: .5; }
.rk { margin-left: auto; margin-right: 13px; }
.blue .rk { margin-right: 6px; }
.mod::before, .sel::before { content: ""; position: absolute; left: 37px; top: 1px; width: 2px; height: 18px; background: #0f81be; }
.sel::before { background: #fff; }
.sel { background: linear-gradient(90deg, #31507c 37px, #2c5d87 37px); color: #e8e8e8; }
.sel .ic { fill: #eee; }

.scene { width: 686px; }
.scenebar { height: 32px; background: #3c3c3c; display: flex; align-items: center; padding-left: 8px; overflow: hidden; flex: none; }
.sb { height: 24px; background: #585858; display: flex; align-items: center; justify-content: center; gap: 8px; flex: none; border-radius: 2px; }
.sb.w49, .sb.w48 { padding-right: 3px; }
.sb.on { background: #46607c; }
.lit { color: #fff; }
.w49 { width: 49px; } .w48 { width: 48px; } .w28 { width: 28px; } .w17 { width: 17px; margin-left: 1px; } .w40 { width: 40px; } .w9 { width: 10px; margin-left: 1px; }
.m4 { margin-left: 4px; }
.w9 { justify-content: flex-start; padding-left: 4px; overflow: hidden; }
.w49 + .w48 { margin-left: 4px; }
.twod { font-weight: 700; font-size: 13px; letter-spacing: 0; }
.grip { width: 5px; height: 20px; border-left: 1px solid #5c5c5c; border-right: 1px solid #5c5c5c; margin-right: 7px; flex: none; }
.g2, .g3 { margin-left: 12px; }
.viewport { position: relative; height: 560px; background: linear-gradient(#6c6461, #68625b 18%, #6b635e 25%, #67615a 50%, #69615b); }
.world { position: absolute; left: 0; top: 0; }
.gizmo text { fill: #e8e8e8; font-size: 14px; }
.gizmo .persp { fill: #c8c5c3; font-size: 15px; }
.tools { position: absolute; left: 3px; top: 3px; width: 54px; height: 179px; background: #121110; border-radius: 4px; padding: 0 4px; display: flex; flex-direction: column; gap: 1px; }
.tools .h { height: 5px; width: 20px; border: solid #777; border-width: 1px 0; margin: 8px auto 6px; }
.tools div { height: 25px; background: #585858; display: flex; align-items: center; justify-content: center; }
.tools div.on { background: #46607c; }
.tools div:nth-of-type(1) { border-radius: 4px 4px 0 0; }
.tools div:last-child { border-radius: 0 0 4px 4px; }

.game { width: 330px; }
.gamebar { height: 26px; background: #3c3c3c; border-bottom: 1px solid #232323; display: flex; flex: none; }
.gd { display: flex; align-items: center; justify-content: space-between; border-right: 1px solid #232323; padding: 0 5px; }
.gd.a { width: 114px; } .gd.b { width: 107px; padding-left: 11px; } .gd.c { border: 0; padding-left: 4px; }
.gameview { position: relative; flex: 1; background: #282828; box-shadow: inset 0 5px 8px -3px #191919, inset 5px 0 6px -4px #191919, inset -5px 0 6px -4px #191919; }
.band { position: absolute; left: 0; top: 169px; width: 330px; height: 175px; background: #1c1c1c; }
.screen { position: absolute; left: 32px; top: 57px; width: 264px; height: 452px; background: #000; }
.msg { position: absolute; left: -2px; top: 221px; width: 334px; display: flex; flex-direction: column; align-items: center; font: 29px/30px "DejaVu Sans", sans-serif; color: #fff; text-shadow: 1px 2px 1px #000; }
.m1 { letter-spacing: 1px; }
.m2 { letter-spacing: .6px; }

.project { flex: 1; width: 1383px; }
.project > .tabs .tab-tools { padding-right: 14px; }
.ps { width: 396px; margin-right: 4px; padding-left: 4px; }
.pf { height: 25px; border-left: 1px solid #282828; display: flex; align-items: center; justify-content: center; letter-spacing: 0; }
.f1 { width: 32px; } .f2 { width: 33px; } .f3 { width: 34px; } .f4 { width: 52px; gap: 1px; padding-right: 1px; }
.f3 svg { fill: #8a8a8a; }
.pbody { flex: 1; display: flex; overflow: hidden; }
.tree { width: 240px; height: 229px; overflow: hidden; }
.trow { height: 20px; display: flex; align-items: center; position: relative; }
.trow.gap { height: 19px; }
.trow b { letter-spacing: .3px; }
.trow .arr { position: absolute; fill: #6f6f6f; }
.trow .ti { margin-right: 5px; }
.trow .s { color: #999; }
.l0 { padding-left: 20px; } .l0 .arr { left: 2px; }
.l0 .ti { width: 16px; }
.l1 { padding-left: 36px; } .l1 .arr { left: 20px; }
.l2 { padding-left: 54px; } .l2 .arr { left: 38px; }
.l2 .ti { margin-right: 4px; }
.tscroll { width: 17px; border-left: 1px solid #303030; border-right: 1px solid #232323; display: flex; flex-direction: column; align-items: center; padding-top: 8px; height: 229px; }
.tscroll i { width: 13px; height: 109px; margin-top: 6px; background: #5f5f5f; border-radius: 7px; }
.tscroll svg:last-child { margin-top: auto; margin-bottom: 3px; }
.assets { flex: 1; background: #333; display: flex; flex-direction: column; }
.crumbs { height: 26px; background: #3f3f3f; border-bottom: 1px solid #262626; display: flex; align-items: center; padding-left: 5px; gap: 8px; flex: none; letter-spacing: .1px; color: #b0b0b0; }
.crumbs b { color: #d0d0d0; }
.agrid { flex: 1; display: flex; padding: 14px 0 0 12px; }
.asset { width: 95px; display: flex; flex-direction: column; align-items: center; font-size: 13px; line-height: 20px; letter-spacing: .1px; }
.asset:nth-child(n) svg { margin-left: 1px; }
.afoot { height: 21px; background: #404040; padding: 11px 19px 0 0; display: flex; justify-content: flex-end; }
.zoom { width: 69px; height: 2px; background: #5f5f5f; }
.zoom i { display: block; width: 12px; height: 12px; border-radius: 6px; background: #999; margin: -5px 0 0 34px; }

.inspector { width: 531px; letter-spacing: .13px; }
.inspector .tab-tools { gap: 14px; padding-right: 15px; }
.ibody { display: flex; flex: 1; }
.fields { width: 515px; }
.row { height: 25px; display: flex; align-items: center; padding-left: 24px; position: relative; }
.row label { width: 190px; flex: none; }
.row.in { padding-left: 42px; }
.row.in label { width: 172px; }
.row.gap { margin-top: 10px; }
.row.fold { padding-left: 8px; }
.fa { fill: #6a6a6a; margin-right: 7px; }
.fold b { flex: 1; letter-spacing: .33px; }
.dd { width: 295px; height: 21px; background: #515151; border-radius: 3px; border-bottom: 1px solid #262626; display: flex; justify-content: space-between; align-items: center; padding: 0 7px 0 5px; color: #e0e0e0; line-height: 18px; box-shadow: 0 0 0 1px #303030; letter-spacing: .2px; }
.off { color: #727272; }
.off .dd { background: #454545; color: #8a8a8a; border-color: #3a3a3a; box-shadow: none; }
.off .dd svg { opacity: .6; }
.cb { width: 17px; height: 18px; background: #2a2a2a; border: 1px solid #1f1f1f; border-top-color: #0d0d0d; border-radius: 3px; display: flex; align-items: center; justify-content: center; }
.of { width: 296px; height: 22px; background: #2a2a2a; border: 1px solid #1f1f1f; border-radius: 3px; display: flex; align-items: center; padding-left: 3px; color: #d2d2d2; margin-top: 1px; letter-spacing: .1px; }
.of i { margin-left: auto; background: #373737; width: 23px; height: 20px; display: flex; align-items: center; justify-content: center; }
.off .of { background: #323232; border-color: #2b2b2b; color: #7a7a7a; }
.off .of svg { opacity: .55; }
.thumb { width: 15px; height: 10px; background: linear-gradient(#000 4px, #5a4030 4px, #5a4030 5px, #000 5px); margin-right: 1px; }
.oi { margin: 0 2px 0 2px; }
.slider { width: 227px; height: 3px; background: #5e5e5e; margin-right: 6px; }
.slider i { display: block; width: 12px; height: 13px; border-radius: 6px; background: #999; margin-top: -5px; }
.num { width: 62px; height: 23px; background: #2a2a2a; border: 1px solid #1f1f1f; border-top-color: #0d0d0d; border-radius: 3px; color: #d2d2d2; padding-left: 3px; line-height: 22px; }
.four { width: 60px; margin-right: 5px; }
.chead { height: 28px; margin-top: 10px; background: #3e3e3e; border-top: 1px solid #1a1a1a; border-bottom: 1px solid #303030; display: flex; align-items: center; padding-left: 8px; position: relative; }
.chead .fa { margin-right: 9px; }
.chead .cicon { margin-right: 5px; }
.chead .cb { margin-right: 8px; }
.chead b { letter-spacing: .28px; }
.hi { margin-left: auto; display: flex; gap: 12px; padding-right: 14px; }
.hi svg:last-child { margin-left: 4px; }
.chead::before, .bar::before { content: ""; position: absolute; left: 0; top: 2px; width: 2px; height: 26px; background: #0f81be; }
.bar { position: relative; padding-top: 4px; }
.bar::before { top: 4px; height: 373px; }
.bar.ar::before { top: 9px; height: 123px; }
.vp { height: 374px; }
.next { height: 11px; margin-top: 9px; background: #3e3e3e; border-top: 1px solid #1a1a1a; padding: 8px 0 0 20px; }
.next i { display: block; width: 40px; height: 2px; background: #585858; }
.iscroll { width: 16px; background: #343434; border-left: 1px solid #2c2c2c; display: flex; flex-direction: column; align-items: center; padding-top: 7px; height: 873px; }
.iscroll i { width: 13px; height: 544px; margin-top: 219px; background: #5f5f5f; border-radius: 7px; }
.iscroll svg:last-child { margin-top: auto; margin-bottom: 3px; }
```
